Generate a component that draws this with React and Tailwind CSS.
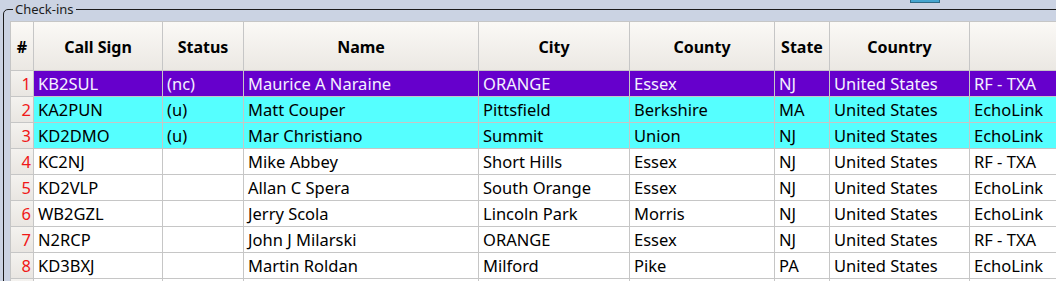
import React from 'react';

const columns = [
  { key: 'call', label: 'Call Sign', w: 'w-[129px]' },
  { key: 'status', label: 'Status', w: 'w-[81px]' },
  { key: 'name', label: 'Name', w: 'w-[235px]' },
  { key: 'city', label: 'City', w: 'w-[151px]' },
  { key: 'county', label: 'County', w: 'w-[145px]' },
  { key: 'state', label: 'State', w: 'w-[55px]' },
  { key: 'country', label: 'Country', w: 'w-[140px]' },
  { key: 'mode', label: '', w: 'w-[110px]' },
];

const checkins = [
  { call: 'KB2SUL', status: '(nc)', name: 'Maurice A Naraine', city: 'ORANGE', county: 'Essex', state: 'NJ', country: 'United States', mode: 'RF - TXA', tone: 'new' },
  { call: 'KA2PUN', status: '(u)', name: 'Matt Couper', city: 'Pittsfield', county: 'Berkshire', state: 'MA', country: 'United States', mode: 'EchoLink', tone: 'upd' },
  { call: 'KD2DMO', status: '(u)', name: 'Mar Christiano', city: 'Summit', county: 'Union', state: 'NJ', country: 'United States', mode: 'EchoLink', tone: 'upd' },
  { call: 'KC2NJ', status: '', name: 'Mike Abbey', city: 'Short Hills', county: 'Essex', state: 'NJ', country: 'United States', mode: 'RF - TXA' },
  { call: 'KD2VLP', status: '', name: 'Allan C Spera', city: 'South Orange', county: 'Essex', state: 'NJ', country: 'United States', mode: 'EchoLink' },
  { call: 'WB2GZL', status: '', name: 'Jerry Scola', city: 'Lincoln Park', county: 'Morris', state: 'NJ', country: 'United States', mode: 'EchoLink' },
  { call: 'N2RCP', status: '', name: 'John J Milarski', city: 'ORANGE', county: 'Essex', state: 'NJ', country: 'United States', mode: 'RF - TXA' },
  { call: 'KD3BXJ', status: '', name: 'Martin Roldan', city: 'Milford', county: 'Pike', state: 'PA', country: 'United States', mode: 'EchoLink' },
  { call: '', status: '', name: '', city: '', county: '', state: '', country: '', mode: '' },
];

const rowTone = {
  new: 'bg-[#6600cc] text-[#f4f0ff]',
  upd: 'bg-[#55ffff] text-black',
};

export default function App() {
  return (
    <div className="relative w-[1056px] h-[281px] overflow-hidden bg-[#cbd3e3] font-['Noto_Sans',sans-serif]">
      {/* bottom edge of a toolbar button above */}
      <div className="absolute left-[910px] top-[-9px] w-[30px] h-[12px] bg-[#45a5cf] border border-[#2c6a86]" />

      <fieldset className="w-[1090px] ml-[3px] border border-[#1c1c1c] rounded-tl-[5px] pl-[6px] pt-[3px]">
        <legend className="ml-[3px] px-[2px] text-[13px] leading-[18px] text-[#1c1c1c]">Check-ins</legend>

        <div className="border-l border-t border-[#c6c6c6] bg-white text-[16.5px]">
          {/* header */}
          <div className="flex h-[49px] border-b border-[#c6c6c6] bg-gradient-to-b from-[#fbf9f6] to-[#ebe8e3] font-bold text-[16px] text-black">
            <div className="w-[23px] shrink-0 border-r border-[#c6c6c6] flex items-center justify-center pt-[2px]">#</div>
            {columns.map((c) => (
              <div key={c.key} className={`${c.w} shrink-0 border-r border-[#c6c6c6] flex items-center justify-center pt-[2px]`}>
                {c.label}
              </div>
            ))}
          </div>

          {/* rows */}
          {checkins.map((r, i) => (
            <div key={i} className={`flex h-[26px] border-b border-[#c6c6c6] ${rowTone[r.tone] || 'text-black'}`}>
              <div className="w-[23px] shrink-0 border-r border-[#c6c6c6] bg-gradient-to-b from-[#f4f2ef] to-[#e9e6e2] text-[#f01818] flex items-center justify-end pr-[2px] pt-[2px]">
                {r.call ? i + 1 : ''}
              </div>
              {columns.map((c) => (
                <div key={c.key} className={`${c.w} shrink-0 border-r border-[#c6c6c6] flex items-center px-[4px] pt-[2px] whitespace-nowrap overflow-hidden`}>
                  {r[c.key]}
                </div>
              ))}
            </div>
          ))}
        </div>
      </fieldset>
    </div>
  );
}
